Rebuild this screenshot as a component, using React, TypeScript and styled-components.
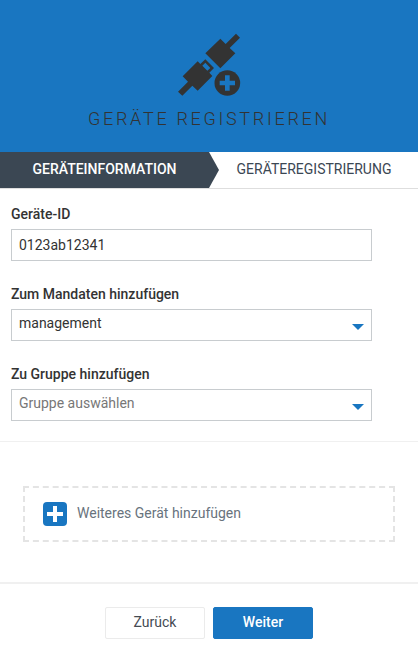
import React, { useState } from 'react';
import styled, { createGlobalStyle } from 'styled-components';

const GlobalStyle = createGlobalStyle`
  *, *::before, *::after { box-sizing: border-box; }
  body {
    margin: 0;
    background: #fff;
    color: #333;
    font: 400 14px/20px Roboto, sans-serif;
  }
`;

const Page = styled.main`
  display: flex;
  flex-direction: column;
  height: 663px;
  overflow: hidden;
`;

const Header = styled.header`
  display: flex;
  flex-direction: column;
  align-items: center;
  height: 152px;
  padding-top: 26px;
  background: #1976c1;
`;

const PlugIcon = styled.svg`
  width: 80px;
  height: 76px;
  margin-left: 2px;
  flex: none;
`;

const Title = styled.h1`
  margin: 5px 0 0;
  font-size: 18px;
  line-height: 24px;
  font-weight: 300;
  letter-spacing: 2.7px;
  white-space: nowrap;
  color: #333;
`;

const Steps = styled.nav`
  display: grid;
  grid-template-columns: 209px 209px;
  height: 37px;
  border-bottom: 1px solid #dedede;
`;

const Step = styled.div<{ $active?: boolean }>`
  position: relative;
  display: flex;
  justify-content: center;
  padding: 7px 0 0 ${p => (p.$active ? 0 : 1)}px;
  font-weight: ${p => (p.$active ? 500 : 400)};
  color: ${p => (p.$active ? '#fff' : '#3b4753')};
  background: ${p => (p.$active ? '#3b4753' : '#fff')};

  &::after {
    content: '';
    display: ${p => (p.$active ? 'block' : 'none')};
    position: absolute;
    z-index: 1;
    top: 0;
    left: 100%;
    border: solid transparent;
    border-width: 18px 0 18px 10px;
    border-left-color: #3b4753;
  }
`;

const Form = styled.form`
  display: flex;
  flex-direction: column;
  gap: 20px;
  height: 253px;
  padding: 15px 46px 0 11px;
  border-bottom: 1px solid #f0f0f0;
`;

const Field = styled.label`
  display: flex;
  flex-direction: column;
  gap: 5px;
  height: 60px;
`;

const Caption = styled.span`
  height: 20px;
  font-weight: 500;
  flex: none;
`;

const Input = styled.input`
  height: 32px;
  width: 100%;
  margin: 0;
  padding: 0 7px;
  border: 1px solid #c8cccf;
  border-radius: 0;
  background: #fff;
  color: #333;
  font: inherit;
  outline: none;
  flex: none;
`;

const Select = styled.div<{ $empty?: boolean }>`
  display: flex;
  justify-content: space-between;
  height: 32px;
  padding: 3px 7px 0;
  border: 1px solid #c8cccf;
  color: ${p => (p.$empty ? '#777' : '#333')};
  flex: none;
`;

const Caret = styled.span`
  height: 0;
  margin-top: 11px;
  border: solid transparent;
  border-width: 6px 6px 0;
  border-top-color: #1976c1;
`;

const AddSection = styled.section`
  height: 142px;
  padding: 44px 23px 0;
  border-bottom: 2px solid #f0f0f0;
`;

const AddButton = styled.div`
  display: flex;
  align-items: center;
  gap: 10px;
  height: 56px;
  padding-left: 18px;
  border: 2px dashed #e4e4e4;
  color: #68737d;
  cursor: pointer;
`;

const AddLabel = styled.span`
  margin-top: -2px;
`;

const Footer = styled.footer`
  display: flex;
  justify-content: center;
  gap: 8px;
  padding-top: 23px;
`;

const Button = styled.button<{ $primary?: boolean }>`
  width: 100px;
  height: 32px;
  padding: 0 0 2px;
  border: 1px solid ${p => (p.$primary ? '#1976c1' : '#ebebeb')};
  border-radius: 2px;
  background: ${p => (p.$primary ? '#1976c1' : '#fff')};
  color: ${p => (p.$primary ? '#fff' : '#444b53')};
  font: ${p => (p.$primary ? 500 : 400)} 14px/20px Roboto, sans-serif;
`;

export default function App() {
  const [deviceId, setDeviceId] = useState('0123ab12341');
  return (
    <Page>
      <GlobalStyle />
      <Header>
        <PlugIcon viewBox="0 0 240 228" fill="#333" aria-hidden="true">
          <path d="M151 38 167 54 198 23 210 35 179 66 196 82 151 127 106 82Z" />
          <path
            fillRule="evenodd"
            d="M83 106 91 114 106 100 132 126 118 140 127 150 83 194 67 179 37 209 24 197 54 167 38 151ZM106 110 97 119 112 134 121 126Z"
          />
          <circle cx="172" cy="171" r="38.5" />
          <path fill="#1976c1" d="M165 148h14v16h16v14h-16v16h-14v-16h-16v-14h16Z" />
        </PlugIcon>
        <Title>GERÄTE REGISTRIEREN</Title>
      </Header>
      <Steps>
        <Step $active>GERÄTEINFORMATION</Step>
        <Step>GERÄTEREGISTRIERUNG</Step>
      </Steps>
      <Form>
        <Field>
          <Caption>Geräte-ID</Caption>
          <Input value={deviceId} onChange={e => setDeviceId(e.target.value)} />
        </Field>
        <Field as="div">
          <Caption>Zum Mandaten hinzufügen</Caption>
          <Select>management<Caret /></Select>
        </Field>
        <Field as="div">
          <Caption>Zu Gruppe hinzufügen</Caption>
          <Select $empty>Gruppe auswählen<Caret /></Select>
        </Field>
      </Form>
      <AddSection>
        <AddButton>
          <svg width="24" height="24" viewBox="0 0 24 24" aria-hidden="true">
            <rect width="24" height="24" rx="4" fill="#1976c1" />
            <path d="M10 4h4v6h6v4h-6v6h-4v-6H4v-4h6Z" fill="#fff" />
          </svg>
          <AddLabel>Weiteres Gerät hinzufügen</AddLabel>
        </AddButton>
      </AddSection>
      <Footer>
        <Button>Zurück</Button>
        <Button $primary>Weiter</Button>
      </Footer>
    </Page>
  );
}
